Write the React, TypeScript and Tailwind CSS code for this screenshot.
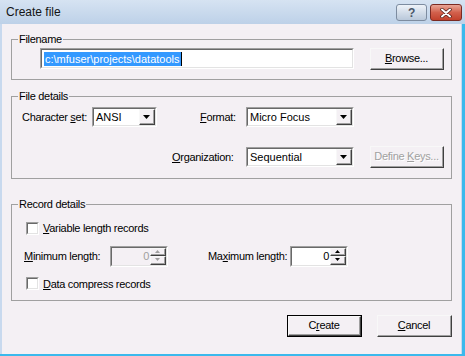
import type { ReactNode } from 'react'

const bg = 'bg-[#f4f0f4]'

function Acc({ children }: { children: ReactNode }) {
  return <span className="underline underline-offset-[1px]">{children}</span>
}

function Sunken({ className = '', inner = 'bg-white', children }: { className?: string; inner?: string; children?: ReactNode }) {
  return (
    <div className={`border border-t-[#a0a0a0] border-l-[#a0a0a0] border-b-white border-r-white ${className}`}>
      <div className={`flex h-full border border-t-[#696969] border-l-[#696969] border-b-[#e3e3e3] border-r-[#e3e3e3] ${inner}`}>
        {children}
      </div>
    </div>
  )
}

function Raised({ className = '', children }: { className?: string; children?: ReactNode }) {
  return (
    <div className={`border border-t-[#f8f8f8] border-l-[#f8f8f8] border-b-[#404040] border-r-[#404040] ${className}`}>
      <div className="flex h-full items-center justify-center border-b border-r border-[#a0a0a0]">{children}</div>
    </div>
  )
}

function Button({ children, w = 'w-[75px]', isDefault, disabled }: { children: ReactNode; w?: string; isDefault?: boolean; disabled?: boolean }) {
  const text = disabled ? 'text-[#a0a0a0] [text-shadow:1px_1px_0_#fff]' : 'text-black'
  if (isDefault) {
    return (
      <div className={`h-[22px] border border-black ${w}`}>
        <Raised className="h-full">
          <span className={text}>{children}</span>
        </Raised>
      </div>
    )
  }
  return (
    <Raised className={`h-[22px] ${w}`}>
      <span className={text}>{children}</span>
    </Raised>
  )
}

function Arrow({ up, small, color = '#000' }: { up?: boolean; small?: boolean; color?: string }) {
  const w = small ? 5 : 7
  const h = small ? 3 : 4
  return (
    <svg width={w} height={h} viewBox={`0 0 ${w} ${h}`}>
      <path d={up ? `M0 ${h}H${w}L${w / 2} 0z` : `M0 0H${w}L${w / 2} ${h}z`} fill={color} />
    </svg>
  )
}

function Combo({ value, w }: { value: string; w: string }) {
  return (
    <Sunken className={`h-[20px] ${w}`}>
      <span className="flex-1 pl-[2px] leading-[16px] tracking-normal">{value}</span>
      <Raised className={`h-full w-[16px] ${bg}`}>
        <Arrow />
      </Raised>
    </Sunken>
  )
}

function Spin({ disabled }: { disabled?: boolean }) {
  const c = disabled ? '#a0a0a0' : '#000'
  return (
    <Sunken className="h-[21px] w-[58px]" inner={disabled ? bg : 'bg-white'}>
      <span className={`flex-1 pr-[1px] text-right leading-[17px] ${disabled ? 'text-[#a0a0a0]' : ''}`}>0</span>
      <div className={`flex w-[16px] flex-col ${bg}`}>
        <Raised className="h-1/2">
          <Arrow up small color={c} />
        </Raised>
        <Raised className="h-1/2">
          <Arrow small color={c} />
        </Raised>
      </div>
    </Sunken>
  )
}

function Check({ label }: { label: ReactNode }) {
  return (
    <div className="flex items-center">
      <Sunken className="h-[13px] w-[13px]" />
      <span className="ml-[4px]">{label}</span>
    </div>
  )
}

function Group({ title, className, children }: { title: string; className: string; children: ReactNode }) {
  return (
    <fieldset className={`mx-[9px] border border-[#a0a0a0] ${className}`}>
      <legend className="ml-[6px] px-[1px] leading-[13px]">{title}</legend>
      {children}
    </fieldset>
  )
}

export default function App() {
  return (
    <div className={`flex h-[356px] w-[465px] flex-col overflow-hidden ${bg} font-['Liberation_Sans',Arial,sans-serif] text-[11px] tracking-[-0.3px] text-black`}>
      {/* title bar */}
      <div className="flex h-[24px] items-center bg-gradient-to-b from-[#d6e3f2] to-[#bdd1e8] pr-[3px]">
        <span className="pl-[6px] text-[12px] tracking-normal text-[#141414]">Create file</span>
        <div className="ml-auto flex gap-[3px] pt-[1px]">
          <div className="flex h-[17px] w-[31px] items-center justify-center rounded-[3px] border border-[#7d8ca0] bg-gradient-to-b from-[#eef3f9] via-[#d3dde9] to-[#b9c8da] text-[12px] font-bold leading-none text-[#4a5668]">
            ?
          </div>
          <div className="flex h-[17px] w-[32px] items-center justify-center rounded-[3px] border border-[#7a2a22] bg-gradient-to-b from-[#e8a597] via-[#d2604c] to-[#c2412c]">
            <svg width="12" height="10" viewBox="0 0 12 10">
              <path d="M2 1.5l8 7M10 1.5l-8 7" stroke="#4a1a14" strokeWidth="3.4" strokeLinecap="round" />
              <path d="M2 1.5l8 7M10 1.5l-8 7" stroke="#fff" strokeWidth="2" strokeLinecap="round" />
            </svg>
          </div>
        </div>
      </div>

      <div className="flex flex-1">
        <div className="w-[2px] bg-[#c8d9ee]" />
        <div className="flex flex-1 flex-col">
          <Group title="Filename" className="mt-[9px] h-[47px]">
            <div className="mt-[2px] flex items-start">
              <Sunken className="ml-[28px] h-[21px] w-[314px]">
                <span className="ml-[2px] mt-[2px] h-[14px] bg-[#3399ff] px-[1px] leading-[14px] tracking-normal text-white">
                  c:\mfuser\projects\datatools
                </span>
                <span className="mt-[2px] h-[14px] w-[1px] bg-black" />
              </Sunken>
              <div className="ml-[16px]">
                <Button w="w-[74px]">
                  <Acc>B</Acc>rowse...
                </Button>
              </div>
            </div>
          </Group>

          <Group title="File details" className="mt-[10px] h-[89px]">
            <div className="mt-[4px] flex items-center">
              <span className="ml-[10px] w-[70px]">
                Character <Acc>s</Acc>et:
              </span>
              <Combo value="ANSI" w="w-[65px]" />
              <span className="ml-[43px] w-[46px]">
                <Acc>F</Acc>ormat:
              </span>
              <Combo value="Micro Focus" w="w-[108px]" />
            </div>
            <div className="mt-[19px] flex items-center">
              <span className="ml-[160px] w-[74px]">
                <Acc>O</Acc>rganization:
              </span>
              <Combo value="Sequential" w="w-[108px]" />
              <div className="ml-[16px]">
                <Button w="w-[74px]" disabled>
                  Define <Acc>K</Acc>eys...
                </Button>
              </div>
            </div>
          </Group>

          <Group title="Record details" className="mt-[19px] h-[103px]">
            <div className="ml-[14px] mt-[9px]">
              <Check
                label={
                  <>
                    <Acc>V</Acc>ariable length records
                  </>
                }
              />
            </div>
            <div className="mt-[9px] flex items-center">
              <span className="ml-[12px] w-[86px]">
                <Acc>M</Acc>inimum length:
              </span>
              <Spin disabled />
              <span className="ml-[40px] w-[82px]">
                Ma<Acc>x</Acc>imum length:
              </span>
              <Spin />
            </div>
            <div className="ml-[14px] mt-[9px]">
              <Check
                label={
                  <>
                    <Acc>D</Acc>ata compress records
                  </>
                }
              />
            </div>
          </Group>

          <div className="mr-[9px] mt-[14px] flex justify-end gap-[15px]">
            <Button isDefault>
              C<Acc>r</Acc>eate
            </Button>
            <Button>
              <Acc>C</Acc>ancel
            </Button>
          </div>
        </div>
        <div className="w-[1px] bg-[#c8d9ee]" />
        <div className="w-[3px] bg-[#3bb9ec]" />
      </div>
      <div className="h-[2px] bg-[#3bb9ec]" />
    </div>
  )
}
